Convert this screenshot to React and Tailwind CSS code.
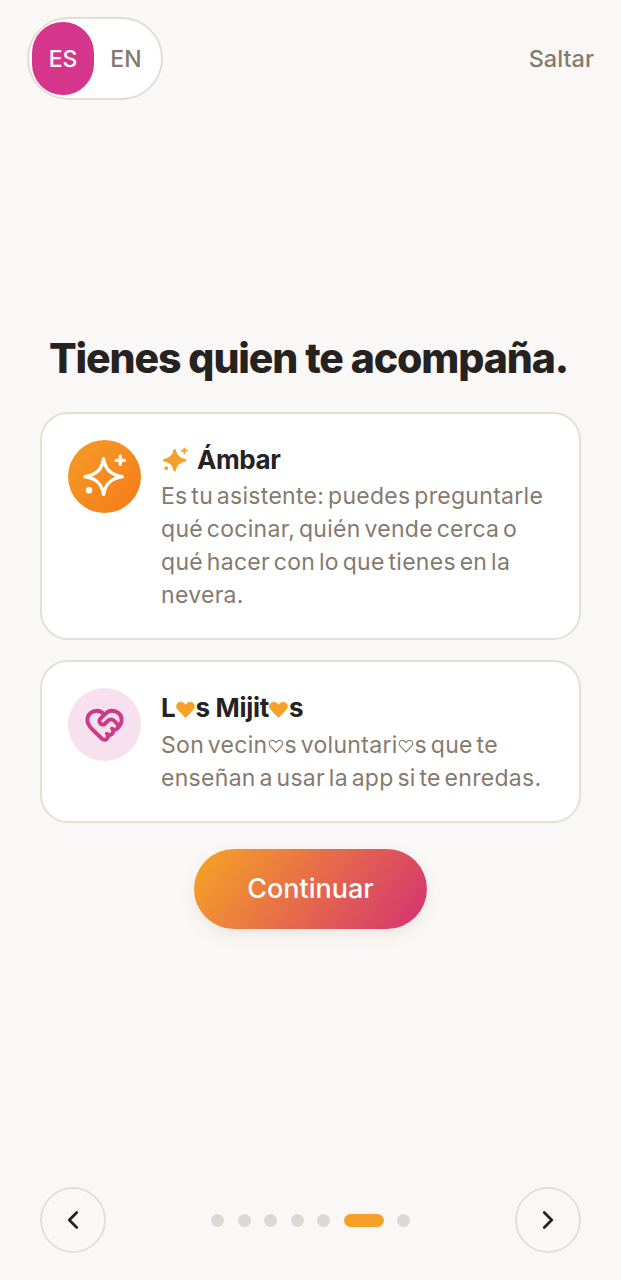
import React from "react";
import { ChevronLeft, ChevronRight, HeartHandshake } from "lucide-react";

const F = { fontFamily: '"Inter", "Liberation Sans", sans-serif' };

function Spark({ className, filled, color }) {
  return (
    <svg viewBox="0 0 36 36" className={className} fill={filled ? color : "none"} stroke={color} strokeWidth={filled ? 2.6 : 2.4} strokeLinejoin="round">
      <path d="M17 5c1.300 7.600 5 11.300 13.500 12.800-8.500 1.500-12.200 5.200-13.500 12.700-1.300-7.500-5-11.200-13.500-12.700C12 16.300 15.700 12.600 17 5z" />
      <path d="M29 3v6M26 6h6" fill="none" strokeWidth="2.400" strokeLinecap="round" />
      <circle cx="6.500" cy="27.500" r="2.300" fill={color} stroke="none" />
    </svg>
  );
}

function H({ filled }) {
  return (
    <svg viewBox="0 0 24 24" className={filled ? "inline-block w-[21px] h-[21px] mx-[-0.5px] align-[-3px]" : "inline-block w-[16px] h-[16px] mx-[0.5px] align-[-1px]"}
      fill={filled ? "#f5a028" : "none"} stroke={filled ? "#f5a028" : "#857a6e"} strokeWidth={filled ? 1 : 1.7} strokeLinejoin="round">
      <path d="M12 21 3.500 12.200C1 9.600 1.500 5.800 4.200 4.300 6.800 2.900 10 3.800 12 7c2-3.200 5.200-4.100 7.800-2.700 2.700 1.500 3.200 5.300.7 7.900L12 21z" />
    </svg>
  );
}

function Card({ icon, title, children }) {
  return (
    <div className="flex gap-[20px] w-full rounded-[28px] border-2 border-[#e5dfd6] bg-white pl-[26px] pr-[24px] pt-[26px] pb-[26px]">
      {icon}
      <div className="flex-1 min-w-0">
        {title}
        <p className="text-[23px] leading-[33px] text-[#857a6e] tracking-[0.3px] [word-spacing:-3px]">{children}</p>
      </div>
    </div>
  );
}

function Dot() {
  return <span className="w-[13px] h-[13px] rounded-full bg-[#e0d7d0]" />;
}

function Round({ children }) {
  return (
    <button className="w-[66px] h-[66px] rounded-full border-2 border-[#e5dfd6] flex items-center justify-center text-[#26221f]">
      {children}
    </button>
  );
}

export default function App() {
  return (
    <div style={F} className="w-[621px] h-[1280px] bg-[#faf8f6] flex flex-col overflow-hidden">
      <header className="flex items-center justify-between pl-[27px] pr-[27px] pt-[17px]">
        <div className="w-[136px] h-[83px] rounded-[42px] border-2 border-[#e6dcd6] bg-white flex items-center p-[3px]">
          <span className="w-[62px] h-[73px] rounded-[36px] bg-[#d6358c] text-white text-[23px] font-medium flex items-center justify-center pt-[1px]">ES</span>
          <span className="flex-1 text-[#857a6e] text-[23px] font-medium text-center pt-[1px]">EN</span>
        </div>
        <span className="text-[23.500px] font-medium text-[#857a6e] pt-[1px]">Saltar</span>
      </header>

      <main className="flex-1 flex flex-col items-center px-[40px] pt-[233px]">
        <h1 className="text-[41px] leading-[50px] font-extrabold text-[#26221f] tracking-[-1.100px] whitespace-nowrap mb-[29px] pr-[4px]">Tienes quien te acompaña.</h1>
        <Card
          icon={
            <div className="w-[73px] h-[73px] shrink-0 rounded-full bg-gradient-to-br from-[#f59c26] to-[#f57a1a] flex items-center justify-center">
              <Spark className="w-[50px] h-[50px]" color="#ffffff" />
            </div>
          }
          title={
            <h2 className="flex items-center gap-[7px] h-[40px] text-[26px] leading-[38px] font-bold text-[#26221f] tracking-[-0.400px]">
              <Spark className="w-[29px] h-[29px]" color="#f5a028" filled />
              Ámbar
            </h2>
          }
        >
          Es tu asistente: puedes preguntarle qué cocinar, quién vende cerca o qué hacer con lo que tienes en la nevera.
        </Card>
        <div className="h-[20px]" />
        <Card
          icon={
            <div className="w-[73px] h-[73px] shrink-0 rounded-full bg-[#f8e1ee] flex items-center justify-center">
              <HeartHandshake className="w-[41px] h-[41px] text-[#cf3a88]" strokeWidth={2.300} />
            </div>
          }
          title={
            <h2 className="h-[41px] text-[26px] leading-[40px] font-bold text-[#26221f] tracking-[-0.300px] whitespace-nowrap">
              L<H filled />s Mijit<H filled />s
            </h2>
          }
        >
          Son vecin<H />s voluntari<H />s que te enseñan a usar la app si te enredas.
        </Card>
        <button className="mt-[26px] w-[233px] h-[80px] rounded-full bg-[linear-gradient(125deg,#f59e28_5%,#d6376e_95%)] text-white text-[27px] font-medium shadow-[0_6px_16px_rgba(120,80,60,0.10)]">
          Continuar
        </button>
      </main>

      <footer className="flex items-center justify-between px-[40px] pb-[27px]">
        <Round><ChevronLeft className="w-[30px] h-[30px]" strokeWidth={2.200} /></Round>
        <div className="flex items-center gap-[13.500px]">
          <Dot /><Dot /><Dot /><Dot /><Dot />
          <span className="w-[40px] h-[13px] rounded-full bg-[#f5a028]" />
          <Dot />
        </div>
        <Round><ChevronRight className="w-[30px] h-[30px]" strokeWidth={2.200} /></Round>
      </footer>
    </div>
  );
}
